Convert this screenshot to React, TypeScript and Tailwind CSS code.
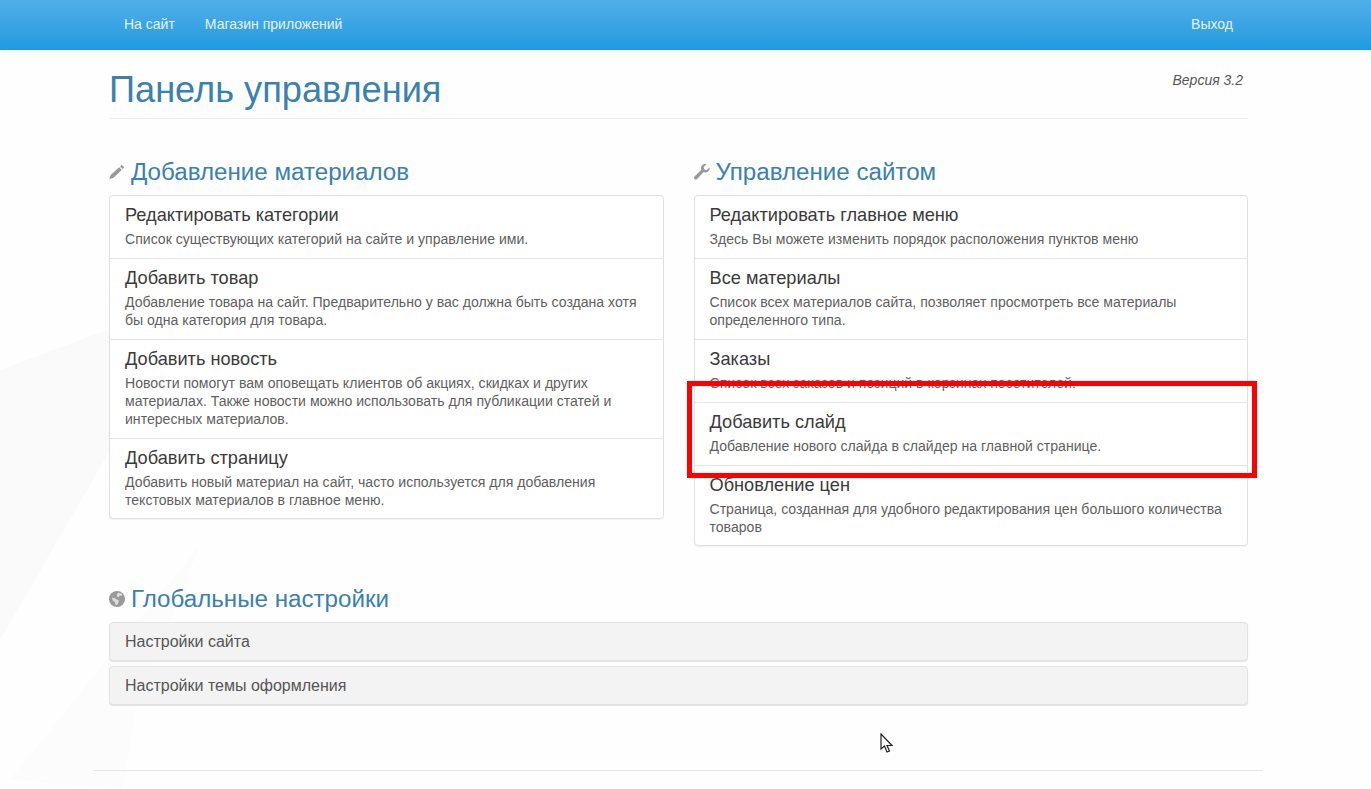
const LEFT_ITEMS = [
  {
    title: "Редактировать категории",
    lines: ["Список существующих категорий на сайте и управление ими."],
  },
  {
    title: "Добавить товар",
    lines: [
      "Добавление товара на сайт. Предварительно у вас должна быть создана хотя",
      "бы одна категория для товара.",
    ],
  },
  {
    title: "Добавить новость",
    lines: [
      "Новости помогут вам оповещать клиентов об акциях, скидках и других",
      "материалах. Также новости можно использовать для публикации статей и",
      "интересных материалов.",
    ],
  },
  {
    title: "Добавить страницу",
    lines: [
      "Добавить новый материал на сайт, часто используется для добавления",
      "текстовых материалов в главное меню.",
    ],
  },
];

const RIGHT_ITEMS = [
  {
    title: "Редактировать главное меню",
    lines: ["Здесь Вы можете изменить порядок расположения пунктов меню"],
  },
  {
    title: "Все материалы",
    lines: [
      "Список всех материалов сайта, позволяет просмотреть все материалы",
      "определенного типа.",
    ],
  },
  {
    title: "Заказы",
    lines: ["Список всех заказов и позиций в корзинах посетителей."],
  },
  {
    title: "Добавить слайд",
    lines: ["Добавление нового слайда в слайдер на главной странице."],
  },
  {
    title: "Обновление цен",
    lines: [
      "Страница, созданная для удобного редактирования цен большого количества",
      "товаров",
    ],
  },
];

type Item = { title: string; lines: string[] };

function ListGroup({ items }: { items: Item[] }) {
  return (
    <div className="rounded-[4px] border border-[#e0e0e0] bg-white shadow-[0_1px_1px_rgba(0,0,0,0.05)]">
      {items.map((item, i) => (
        <div
          key={item.title}
          className={
            i > 0
              ? "border-t border-[#e4e4e4] px-[15px] pt-[10px] pb-[10px] last:pb-[9px]"
              : "px-[15px] pt-[10px] pb-[10px]"
          }
        >
          <h4 className="mb-[5px] text-[18.2px] leading-[19px] font-medium text-[#3a3a3a]">{item.title}</h4>
          {item.lines.map((line) => (
            <p key={line} className="text-[14.08px] leading-[18px] text-[#5f5f5f]">
              {line}
            </p>
          ))}
        </div>
      ))}
    </div>
  );
}

function PencilIcon() {
  return (
    <svg viewBox="0 0 16 16" className="h-4 w-4 fill-[#999]">
      <path d="M12.600 .8l2.700 2.700-1.600 1.600-2.700-2.700zM10.100 3.300l2.700 2.700-8.300 7.800-4.200 1.500 1.400-4.200z" />
    </svg>
  );
}

function WrenchIcon() {
  return (
    <svg viewBox="0 0 16 16" className="h-4 w-4 fill-[#999]">
      <path d="M15.600 3.400l-2.800 2.700-2.500-.5-.6-2.500L12.500.3C10.700-.3 8.700.3 7.700 1.700c-.9 1.300-.9 2.800-.4 4L.6 12.400c-.8.800-.8 1.900-.1 2.600.7.700 1.900.7 2.600-.1l6.700-6.800c1.300.5 2.800.4 4-.4 1.500-1.100 2.200-2.900 1.800-4.300z" />
    </svg>
  );
}

function GlobeIcon() {
  return (
    <svg viewBox="0 0 16 16" className="h-4 w-4">
      <circle cx="8" cy="8" r="8" fill="#999" />
      <path d="M9 1.800c1.700-.2 3.400.6 4.300 1.800l-1.100 1.300-1.500-.3-.8 1.600-1.900-.7-.3-1.900zM2.800 6.500l3 .4 1.900 1.600 1.800.4.300 1.900-1.600 3-1.500.4-.8-2.900-2-1.600z" fill="#dcdcdc" />
    </svg>
  );
}

function SectionTitle({ icon, children }: { icon: React.ReactNode; children: React.ReactNode }) {
  return (
    <h3 className="mb-[10px] flex h-[26px] items-center gap-[6px] text-[24.15px] leading-[26px] font-medium text-[#3a81ad]">
      {icon}
      {children}
    </h3>
  );
}

export default function App() {
  return (
    <div className="relative h-[789px] overflow-hidden bg-[#fefefe] font-['Liberation_Sans',Arial,sans-serif]">
      {/* фоновая картинка */}
      <svg className="pointer-events-none absolute inset-0 h-full w-full" viewBox="0 0 1371 789">
        <path d="M0 370L200 295 0 640z" fill="#fafafa" />
        <path d="M10 780L200 545 137 703 123 789z" fill="#fcfcfc" />
      </svg>

      <div className="relative">
        <nav className="h-[50px] bg-gradient-to-b from-[#50aee8] to-[#1e9ae0] shadow-[0_1px_6px_rgba(0,0,0,0.08)]">
          <div className="ml-[93px] flex h-full w-[1170px] items-center justify-between pr-[15px] pb-[2px] pl-[16px] text-[14px] text-[#e6f2fb]">
            <div className="flex">
              <a className="px-[15px]">На сайт</a>
              <a className="px-[15px]">Магазин приложений</a>
            </div>
            <a className="px-[15px]">Выход</a>
          </div>
        </nav>

        <main className="ml-[93px] w-[1170px] pr-[15px] pl-[16px]">
          <header className="flex h-[69px] items-start justify-between border-b border-[#eee]">
            <h1 className="mt-[20px] text-[36.2px] leading-[40px] font-medium text-[#3a81ad]">Панель управления</h1>
            <em className="mt-[20px] mr-[5px] text-[14px] leading-[20px] text-[#555]">Версия 3.2</em>
          </header>

          <div className="mt-[40px] grid grid-cols-2 items-start gap-[30px]">
            <section>
              <SectionTitle icon={<PencilIcon />}>Добавление материалов</SectionTitle>
              <ListGroup items={LEFT_ITEMS} />
            </section>
            <section>
              <SectionTitle icon={<WrenchIcon />}>Управление сайтом</SectionTitle>
              <ListGroup items={RIGHT_ITEMS} />
            </section>
          </div>

          <section className="mt-[40px]">
            <SectionTitle icon={<GlobeIcon />}>Глобальные настройки</SectionTitle>
            <div className="flex flex-col gap-[5px]">
              <div className="flex h-[39px] items-center rounded-[4px] border border-[#e3e3e3] bg-[#f3f3f3] px-[15px] text-[16px] text-[#555] shadow-[0_1px_1px_rgba(0,0,0,0.1)]">
                Настройки сайта
              </div>
              <div className="flex h-[39px] items-center rounded-[4px] border border-[#e3e3e3] bg-[#f3f3f3] px-[15px] text-[16px] text-[#555] shadow-[0_1px_1px_rgba(0,0,0,0.1)]">
                Настройки темы оформления
              </div>
            </div>
          </section>
        </main>

        <div className="mt-[65px] ml-[93px] w-[1170px] border-t border-[#e5e5e5]" />
      </div>

      {/* выделение на скриншоте */}
      <div className="absolute top-[381px] left-[687px] h-[97px] w-[570px] border-[5px] border-[#ff0000]" />
      {/* курсор */}
      <svg className="absolute top-[733px] left-[880px]" width="14" height="20" viewBox="0 0 14 20">
        <path d="M1 1v15l3.500-3 2.500 6 2.500-1-2.500-5.500H12z" fill="#fff" stroke="#222" strokeWidth="1.200" />
      </svg>
    </div>
  );
}
